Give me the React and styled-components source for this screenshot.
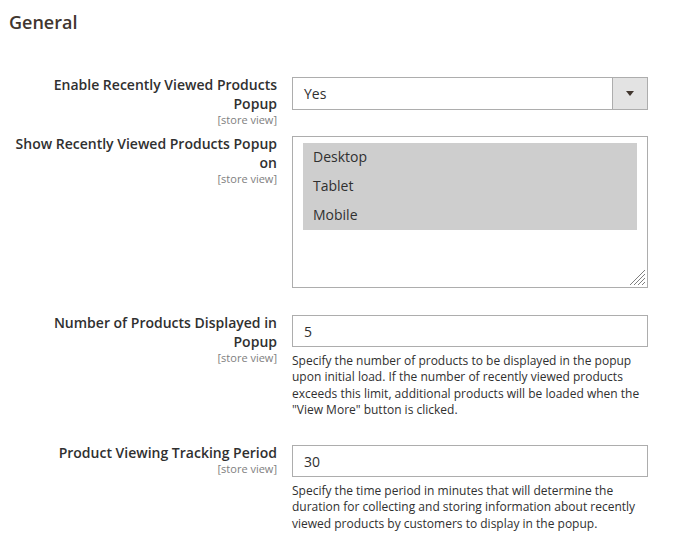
import React from "react";
import styled, { createGlobalStyle } from "styled-components";

const GlobalStyle = createGlobalStyle`
  html, body {
    margin: 0;
    padding: 0;
    background: #ffffff;
  }
  body {
    font-family: "Open Sans", "Liberation Sans", sans-serif;
    color: #303030;
  }
`;

const Page = styled.div`
  width: 685px;
  height: 548px;
  padding: 10px 8px 0 8px;
  box-sizing: border-box;
  overflow: hidden;
`;

const Title = styled.h2`
  margin: 0 0 40px 1px;
  font-size: 18px;
  font-weight: 600;
  line-height: 25px;
  color: #41362f;
`;

const Row = styled.div`
  display: grid;
  grid-template-columns: 269px 356px;
  column-gap: 15px;
  align-items: start;
  margin-bottom: ${(p) => p.$gap}px;
`;

const LabelCol = styled.div`
  text-align: right;
`;

const LabelText = styled.div`
  font-size: 14px;
  font-weight: 600;
  line-height: 19px;
  color: #303030;
`;

const Scope = styled.div`
  font-size: 11px;
  line-height: 13px;
  color: #808080;
`;

const Control = styled.div`
  margin-top: 2px;
`;

const SelectBox = styled.div`
  display: flex;
  height: 33px;
  border: 1px solid #adadad;
  box-sizing: border-box;
`;

const SelectValue = styled.div`
  flex: 1;
  display: flex;
  align-items: center;
  padding-left: 11px;
  font-size: 14px;
  color: #303030;
`;

const SelectArrow = styled.div`
  width: 34px;
  background: #e3e3e3;
  border-left: 1px solid #adadad;
  display: flex;
  align-items: center;
  justify-content: center;

  &::after {
    content: "";
    border-left: 4px solid transparent;
    border-right: 4px solid transparent;
    border-top: 5px solid #41362f;
  }
`;

const MultiBox = styled.div`
  position: relative;
  height: 152px;
  border: 1px solid #adadad;
  box-sizing: border-box;
  padding: 6px 10px 0 10px;
`;

const Option = styled.div`
  height: 29px;
  line-height: 28px;
  padding-left: 10px;
  background: #cecece;
  font-size: 14px;
  color: #303030;
`;

const Grip = styled.svg`
  position: absolute;
  right: 1px;
  bottom: 1px;
`;

const Input = styled.div`
  height: 32px;
  border: 1px solid #adadad;
  box-sizing: border-box;
  display: flex;
  align-items: center;
  padding-left: 11px;
  font-size: 14px;
  color: #303030;
`;

const Note = styled.div`
  margin-top: 6px;
  font-size: 12px;
  line-height: 16.3px;
  color: #303030;
`;

const Label = ({ text }) => (
  <LabelCol>
    <LabelText>{text}</LabelText>
    <Scope>[store view]</Scope>
  </LabelCol>
);

export default function App() {
  return (
    <Page>
      <GlobalStyle />
      <Title>General</Title>

      <Row $gap={8}>
        <Label text="Enable Recently Viewed Products Popup" />
        <Control>
          <SelectBox>
            <SelectValue>Yes</SelectValue>
            <SelectArrow />
          </SelectBox>
        </Control>
      </Row>

      <Row $gap={25}>
        <Label text="Show Recently Viewed Products Popup on" />
        <Control>
          <MultiBox>
            <Option>Desktop</Option>
            <Option>Tablet</Option>
            <Option>Mobile</Option>
            <Grip width="18" height="18" viewBox="0 0 18 18">
              <g stroke="#808080" strokeWidth="1">
                <line x1="2" y1="17" x2="17" y2="2" />
                <line x1="6" y1="17" x2="17" y2="6" />
                <line x1="10" y1="17" x2="17" y2="10" />
                <line x1="14" y1="17" x2="17" y2="14" />
              </g>
            </Grip>
          </MultiBox>
        </Control>
      </Row>

      <Row $gap={25}>
        <Label text="Number of Products Displayed in Popup" />
        <Control>
          <Input>5</Input>
          <Note>
            Specify the number of products to be displayed in the popup upon
            initial load. If the number of recently viewed products exceeds
            this limit, additional products will be loaded when the "View
            More" button is clicked.
          </Note>
        </Control>
      </Row>

      <Row $gap={25}>
        <Label text="Product Viewing Tracking Period" />
        <Control>
          <Input>30</Input>
          <Note>
            Specify the time period in minutes that will determine the
            duration for collecting and storing information about recently
            viewed products by customers to display in the popup.
          </Note>
        </Control>
      </Row>
    </Page>
  );
}
